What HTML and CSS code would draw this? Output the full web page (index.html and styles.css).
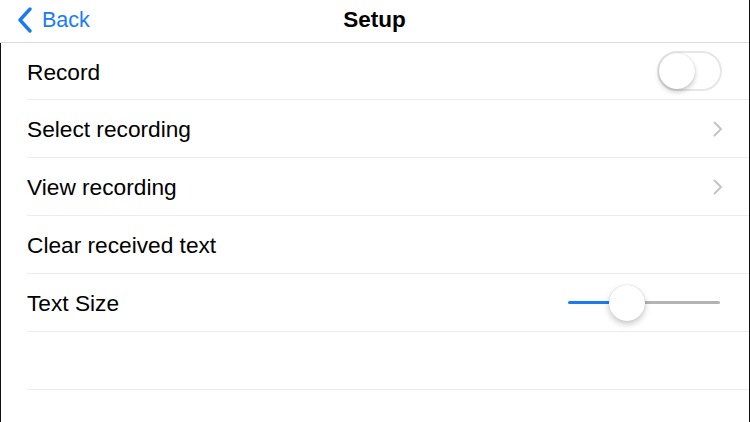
FILE: index.html
```html
<!DOCTYPE html>
<html>
<head>
<meta charset="utf-8">
<link rel="stylesheet" href="styles.css">
</head>
<body>
<div class="screen">
  <header class="nav">
    <div class="back">
      <svg class="back-chev" width="16" height="26" viewBox="0 0 16 26"><path d="M13 2 L3 13 L13 24" fill="none" stroke="#1a7cf5" stroke-width="3.4" stroke-linecap="round" stroke-linejoin="round"/></svg>
      <span>Back</span>
    </div>
    <div class="title">Setup</div>
  </header>
  <main class="body">
    <ul class="list">
      <li class="row"><span class="label">Record</span><span class="toggle"><span class="knob"></span></span></li>
      <li class="row"><span class="label">Select recording</span><svg class="chev" width="10" height="16" viewBox="0 0 10 16"><path d="M1.5 1.5 L8 8 L1.5 14.5" fill="none" stroke="#c4c4c8" stroke-width="2" stroke-linecap="round" stroke-linejoin="round"/></svg></li>
      <li class="row"><span class="label">View recording</span><svg class="chev" width="10" height="16" viewBox="0 0 10 16"><path d="M1.5 1.5 L8 8 L1.5 14.5" fill="none" stroke="#c4c4c8" stroke-width="2" stroke-linecap="round" stroke-linejoin="round"/></svg></li>
      <li class="row"><span class="label">Clear received text</span></li>
      <li class="row"><span class="label">Text Size</span>
        <span class="slider"><span class="fill"></span><span class="track"></span><span class="thumb"></span></span>
      </li>
      <li class="row empty"></li>
    </ul>
  </main>
</div>
</body>
</html>
```

FILE: styles.css
```css
* { box-sizing: border-box; }
html, body { margin: 0; padding: 0; background: #fff; }
body { font-family: "Liberation Sans", Arial, sans-serif; color: #000; }
.screen {
  width: 750px; height: 422px; overflow: hidden;
  border-right: 1px solid #111;
  display: flex; flex-direction: column;
}
.nav {
  height: 43px; flex: none;
  border-bottom: 1px solid #dcdcdc;
  position: relative;
  display: flex; align-items: center; justify-content: center;
}
.back {
  position: absolute; left: 17px; top: 7px;
  display: flex; align-items: center; gap: 9px;
  color: #1a7cf5; font-size: 21.5px;
}
.title { font-size: 22.5px; font-weight: bold; position: relative; top: -1px; }
.body { flex: 1; border-left: 1px solid #111; }
.list { list-style: none; margin: 0; padding: 0 0 0 26px; }
.row {
  height: 58px;
  border-bottom: 1px solid #ececec;
  display: flex; align-items: center; justify-content: space-between;
  padding-right: 27px;
}
.row:first-child { height: 57px; }
.label { font-size: 22.7px; position: relative; top: 1px; }
.toggle {
  width: 65px; height: 40px; border-radius: 20px;
  border: 2px solid #e6e6e6; background: #fff;
  position: relative;
}
.knob {
  position: absolute; left: 0px; top: 0px;
  width: 36px; height: 36px; border-radius: 50%;
  background: #fff;
  box-shadow: 0 3px 5px rgba(0,0,0,0.2), 0 0 1px rgba(0,0,0,0.25);
}
.chev { position: relative; left: 1px; }
.slider {
  width: 152px; height: 36px; position: relative;
  display: flex; align-items: center;
  margin-right: 2px;
}
.fill { width: 42px; height: 3px; background: #1a7cf5; border-radius: 2px; }
.track { flex: 1; height: 3px; background: #b4b4b4; border-radius: 2px; }
.thumb {
  position: absolute; left: 41px; top: 0;
  width: 36px; height: 36px; border-radius: 50%;
  background: #fff;
  box-shadow: 0 3px 6px rgba(0,0,0,0.22), 0 0 1px rgba(0,0,0,0.25);
}
```
